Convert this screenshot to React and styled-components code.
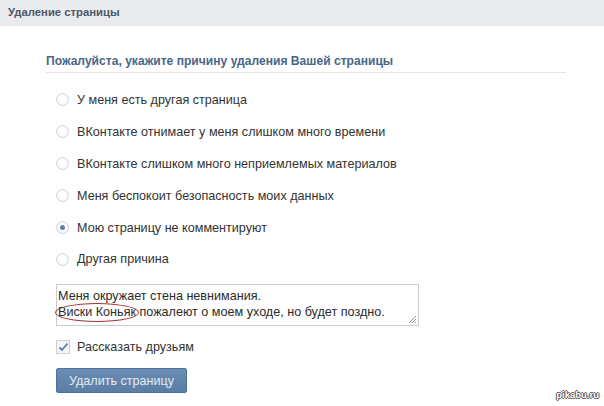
import React from 'react';
import styled, { createGlobalStyle } from 'styled-components';

const GlobalStyle = createGlobalStyle`
  body {
    margin: 0;
    background: #fff;
    font-family: "Liberation Sans", Arial, sans-serif;
  }
`;

const Page = styled.div`
  position: relative;
  width: 604px;
  height: 406px;
  overflow: hidden;
  background: #fff;
`;

const Header = styled.div`
  height: 24px;
  background: #eaebef;
  display: flex;
  align-items: center;
  padding: 0 8px 2px;
  font-size: 11.3px;
  font-weight: bold;
  color: #4b5867;
`;

const Content = styled.div`
  padding: 28px 0 0 46px;
`;

const SectionTitle = styled.div`
  width: 520px;
  padding-bottom: 4px;
  border-bottom: 1px solid #e4e6ea;
  font-size: 12.1px;
  font-weight: bold;
  color: #4a6687;
`;

const Form = styled.div`
  padding: 11px 0 0 10px;
`;

const ReasonList = styled.div`
  display: flex;
  flex-direction: column;
`;

const Row = styled.label`
  display: flex;
  align-items: center;
  height: 31.9px;
  gap: 8px;
  font-size: 12.6px;
  color: #333;
`;

const Radio = styled.span`
  width: 11px;
  height: 11px;
  border-radius: 50%;
  border: 1px solid #cfd3d8;
  background: radial-gradient(circle at 50% 40%, #ffffff 30%, #eef0f3 100%);
  display: flex;
  align-items: center;
  justify-content: center;
  &::after {
    content: '';
    width: 5px;
    height: 5px;
    border-radius: 50%;
    background: ${p => (p.$checked ? '#5f82aa' : 'transparent')};
  }
`;

const TextBox = styled.div`
  position: relative;
  margin-top: 9px;
  width: 359px;
  height: 37px;
  border: 1px solid #c9cdd2;
  padding: 3px 1px 0;
  font-size: 12.6px;
  line-height: 16px;
  color: #2b2b2b;
`;

const Circled = styled.span`
  position: relative;
  &::after {
    content: '';
    position: absolute;
    left: -3px;
    right: -3px;
    top: -2px;
    bottom: -3px;
    border: 1.5px solid #a4363a;
    border-radius: 50%;
  }
`;

const Grip = styled.svg`
  position: absolute;
  right: 1px;
  bottom: 1px;
`;

const CheckRow = styled.label`
  display: flex;
  align-items: center;
  gap: 7px;
  margin-top: 13px;
  height: 16px;
  font-size: 12.6px;
  color: #333;
`;

const CheckBox = styled.span`
  width: 12px;
  height: 12px;
  border: 1px solid #cdd1d6;
  background: #f4f5f7;
  display: flex;
  align-items: center;
  justify-content: center;
`;

const Button = styled.button`
  display: block;
  margin-top: 13px;
  width: 131px;
  height: 25px;
  border: 1px solid #50739a;
  border-radius: 2px;
  background: linear-gradient(#6a8cb2, #5a7ea6);
  color: #e4ebf3;
  font-family: "Liberation Sans", Arial, sans-serif;
  font-size: 12.6px;
  padding: 0;
`;

const Watermark = styled.div`
  position: absolute;
  right: 5px;
  bottom: 6px;
  font-family: "Liberation Sans", sans-serif;
  font-size: 9.5px;
  font-weight: bold;
  color: #fff;
  text-shadow: 1px 0 #555, -1px 0 #555, 0 1px #555, 0 -1px #555;
`;

const reasons = [
  'У меня есть другая страница',
  'ВКонтакте отнимает у меня слишком много времени',
  'ВКонтакте слишком много неприемлемых материалов',
  'Меня беспокоит безопасность моих данных',
  'Мою страницу не комментируют',
  'Другая причина',
];

export default function App() {
  return (
    <Page>
      <GlobalStyle />
      <Header>Удаление страницы</Header>
      <Content>
        <SectionTitle>Пожалуйста, укажите причину удаления Вашей страницы</SectionTitle>
        <Form>
          <ReasonList>
            {reasons.map((r, i) => (
              <Row key={r}>
                <Radio $checked={i === 4} />
                {r}
              </Row>
            ))}
          </ReasonList>
          <TextBox>
            Меня окружает стена невнимания.
            <br />
            <Circled>Виски Коньяк</Circled> пожалеют о моем уходе, но будет поздно.
            <Grip width="9" height="9" viewBox="0 0 9 9">
              <path d="M8 1 L1 8 M8 4 L4 8 M8 7 L7 8" stroke="#9a9a9a" strokeWidth="1" />
            </Grip>
          </TextBox>
          <CheckRow>
            <CheckBox>
              <svg width="11" height="10" viewBox="0 0 11 10">
                <path d="M1.5 5.5 L4 8 L9.5 1.5" fill="none" stroke="#5b7ea8" strokeWidth="1.8" />
              </svg>
            </CheckBox>
            Рассказать друзьям
          </CheckRow>
          <Button>Удалить страницу</Button>
        </Form>
      </Content>
      <Watermark>pikabu.ru</Watermark>
    </Page>
  );
}
